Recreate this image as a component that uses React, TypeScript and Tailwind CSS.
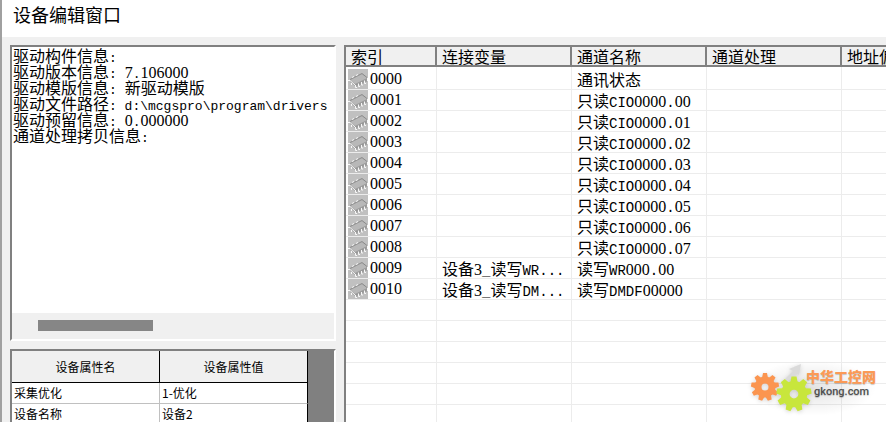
import { Fragment } from 'react';

const driverInfo = [
  '驱动构件信息:',
  '驱动版本信息: 7.106000',
  '驱动模版信息: 新驱动模版',
  '驱动文件路径: d:\\mcgspro\\program\\drivers',
  '驱动预留信息: 0.000000',
  '通道处理拷贝信息:',
];

const properties = [
  { name: '采集优化', value: '1-优化' },
  { name: '设备名称', value: '设备2' },
];

const columns = ['索引', '连接变量', '通道名称', '通道处理', '地址偏移'];

const channels = [
  { index: '0000', variable: '', name: '通讯状态' },
  { index: '0001', variable: '', name: '只读CIO0000.00' },
  { index: '0002', variable: '', name: '只读CIO0000.01' },
  { index: '0003', variable: '', name: '只读CIO0000.02' },
  { index: '0004', variable: '', name: '只读CIO0000.03' },
  { index: '0005', variable: '', name: '只读CIO0000.04' },
  { index: '0006', variable: '', name: '只读CIO0000.05' },
  { index: '0007', variable: '', name: '只读CIO0000.06' },
  { index: '0008', variable: '', name: '只读CIO0000.07' },
  { index: '0009', variable: '设备3_读写WR...', name: '读写WR000.00' },
  { index: '0010', variable: '设备3_读写DM...', name: '读写DMDF00000' },
];

const emptyRows = [0, 1, 2, 3, 4, 5];

// Digits and Latin runs each take about half a CJK cell per character
function Mixed({ text, latin = 'text-sm' }: { text: string; latin?: string }) {
  return (
    <>
      {text.split(/([0-9]+|[^0-9\u0080-\uffff]+)/).map((part, i) => {
        if (i % 2 === 0) return <Fragment key={i}>{part}</Fragment>;
        return /[0-9]/.test(part) ? (
          <span key={i} className="font-['Liberation_Serif',serif] leading-none">
            {part}
          </span>
        ) : (
          <span key={i} className={`font-['Liberation_Mono',monospace] ${latin}`}>
            <span className="leading-none">{part}</span>
          </span>
        );
      })}
    </>
  );
}

function ChipIcon() {
  return (
    <svg className="h-5 w-5 shrink-0 bg-[#c0c0c0]" viewBox="0 0 20 20" aria-hidden="true">
      <path d="M2 11 14 5l5 4v2L7 17l-5-4z" fill="#9c9c9c" />
      <path d="M2 11 14 5l5 4L7 15z" fill="#b8b8b8" />
      <path d="M2 10.500 14 4.500l5 4" fill="none" stroke="#8a8a8a" />
      <path d="M0 11.500h2l5 4.500M4 8.500l2-1M8 6.500l2-1" fill="none" stroke="#f8f8f8" />
      <path
        d="M3.500 14v2M7.500 16v2.500h1.500M10.500 14.500v3h1.500M13.500 13v3h1.500M16.500 11.500v3h1.500M19.500 9v3"
        fill="none"
        stroke="#f8f8f8"
      />
      <path d="M9 15.500v2M12 14v2M15 12.500v2M18 11v2" fill="none" stroke="#858585" />
    </svg>
  );
}

function Gear({ x, y, size, color }: { x: number; y: number; size: number; color: string }) {
  const teeth = [0, 40, 80, 120, 160, 200, 240, 280, 320];
  return (
    <g transform={`translate(${x} ${y}) scale(${size})`}>
      {teeth.map((angle) => (
        <path key={angle} d="M-3 -9 -2 -14H2L3 -9z" fill={color} transform={`rotate(${angle})`} />
      ))}
      <circle r="7" fill="none" stroke={color} strokeWidth="7" />
    </g>
  );
}

function Watermark() {
  return (
    <div className="absolute right-2.5 bottom-1.5 flex items-start bg-[radial-gradient(closest-side,#0000001c,transparent)]">
      <svg className="h-14 w-16 shrink-0 drop-shadow-sm" viewBox="0 0 64 56" aria-hidden="true">
        <path d="m33 21 10-10-4-2 12-5-2 11-3-2-10 10z" fill="#dadada" />
        <Gear x={15} y={27} size={1} color="#fb9550" />
        <Gear x={44} y={34} size={1.25} color="#c8e63c" />
      </svg>
      <div className="-ml-2 pt-2 text-shadow-xs">
        <div className="text-sm leading-4 font-black text-[#fb9a56]">中华工控网</div>
        <div className="pl-2 font-['Roboto',sans-serif] text-[11px] leading-4 font-medium text-[#505050]">
          gkong.com
        </div>
      </div>
    </div>
  );
}

export default function App() {
  return (
    <div className="flex h-screen flex-col overflow-hidden border-l-2 border-[#a0a0a0] bg-[#f0f0f0] font-['Noto_Sans_CJK_SC',sans-serif] text-base text-black">
      <header className="bg-white px-[11px] pt-0.5 pb-[11px]">
        <h1 className="text-lg leading-6">设备编辑窗口</h1>
      </header>

      <main className="flex min-h-0 flex-1 gap-2 pt-2 pl-2">
        {/* Driver info and device properties */}
        <div className="flex w-[326px] shrink-0 flex-col gap-2">
          <section className="flex h-[296px] shrink-0 flex-col border-2 border-t-[#808080] border-r-white border-b-white border-l-[#808080] bg-white">
            <div className="flex-1 overflow-hidden pl-px leading-4 whitespace-pre">
              {driverInfo.map((line) => (
                <p key={line} className="h-4">
                  <Mixed text={line} latin="text-[13px] leading-none" />
                </p>
              ))}
            </div>
            <div className="h-[26px] bg-[#f0f0f0] pt-[7px] pl-[26px]">
              <div className="h-[11px] w-[115px] bg-[#868686]" />
            </div>
          </section>

          <section className="min-h-0 flex-1 overflow-hidden border-t-2 border-r-2 border-l-2 border-[#808080] border-r-white bg-[#808080]">
            <table className="w-[296px] table-fixed border-separate border-spacing-0 bg-white text-xs">
              <thead>
                <tr className="h-8 bg-[#f0f0f0]">
                  <th className="border-r border-b border-black font-normal">设备属性名</th>
                  <th className="border-r border-b border-black font-normal">设备属性值</th>
                </tr>
              </thead>
              <tbody>
                {properties.map((p) => (
                  <tr key={p.name} className="h-[21px]">
                    <td className="border-r border-b border-[#c0c0c0] px-0.5 py-0">{p.name}</td>
                    <td className="border-r border-b border-r-black border-b-[#c0c0c0] px-0.5 py-0">{p.value}</td>
                  </tr>
                ))}
              </tbody>
            </table>
          </section>
        </div>

        {/* Channel list */}
        <section className="relative min-w-0 flex-1 overflow-hidden border-t-2 border-l-2 border-[#808080] bg-white">
          <table className="w-full min-w-[631px] table-fixed border-separate border-spacing-0 leading-5">
            <colgroup>
              <col className="w-[91px]" />
              <col className="w-[135px]" />
              <col className="w-[135px]" />
              <col className="w-[135px]" />
              <col />
            </colgroup>
            <thead>
              <tr className="h-5 bg-[#f0f0f0]">
                {columns.map((c) => (
                  <th
                    key={c}
                    className="border-r-2 border-b-2 border-[#808080] py-0 pl-[5px] text-left leading-[18px] font-normal"
                  >
                    {c}
                  </th>
                ))}
              </tr>
            </thead>
            <tbody>
              <tr className="h-0.5">
                {columns.map((c) => (
                  <td key={c} className="border-r border-[#ececec] p-0" />
                ))}
              </tr>
              {channels.map((ch) => (
                <tr key={ch.index} className="h-[21px]">
                  <td className="border-r border-b border-[#ececec] py-0 pr-0 pl-0.5">
                    <div className="flex items-center gap-0.5">
                      <ChipIcon />
                      <Mixed text={ch.index} />
                    </div>
                  </td>
                  <td className="border-r border-b border-[#ececec] py-0 pr-0 pl-[5px] whitespace-nowrap">
                    <Mixed text={ch.variable} latin="text-sm leading-none" />
                  </td>
                  <td className="border-r border-b border-[#ececec] py-0 pr-0 pl-[5px] whitespace-nowrap">
                    <Mixed text={ch.name} latin="text-sm leading-none" />
                  </td>
                  <td className="border-r border-b border-[#ececec] p-0" />
                  <td className="border-b border-[#ececec] p-0" />
                </tr>
              ))}
              {emptyRows.map((r) => (
                <tr key={r} className="h-[21px]">
                  {columns.map((c) => (
                    <td key={c} className="border-r border-b border-[#ececec] p-0" />
                  ))}
                </tr>
              ))}
            </tbody>
          </table>
          <Watermark />
        </section>
      </main>
    </div>
  );
}
